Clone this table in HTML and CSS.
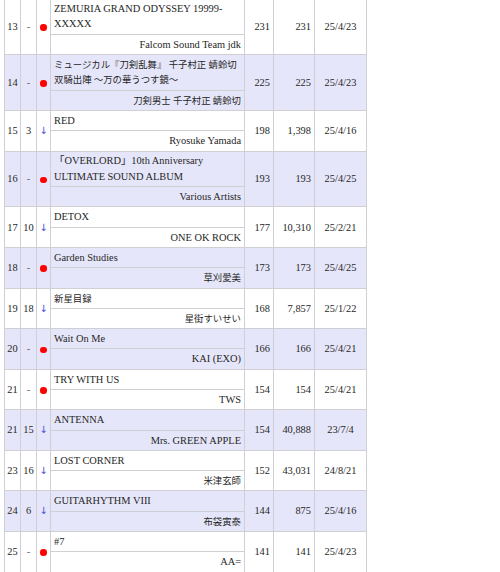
FILE: index.html
```html
<!DOCTYPE html>
<html lang="ja">
<head>
<meta charset="utf-8">
<title>Chart</title>
<link rel="stylesheet" href="styles.css">
</head>
<body>
<table class="chart">
  <colgroup>
    <col class="c-rank"><col class="c-prev"><col class="c-mark"><col class="c-title"><col class="c-n1"><col class="c-n2"><col class="c-date">
  </colgroup>
  <tbody>
    <tr>
      <td>13</td><td class="prev">-</td><td><span class="dot"></span></td>
      <td class="title"><div class="name">ZEMURIA GRAND ODYSSEY 19999-<wbr>XXXXX</div><div class="artist">Falcom Sound Team jdk</div></td>
      <td class="num">231</td><td class="num">231</td><td>25/4/23</td>
    </tr>
    <tr class="alt">
      <td>14</td><td class="prev">-</td><td><span class="dot"></span></td>
      <td class="title"><div class="name"><span class="ja">ミュージカル『刀剣乱舞』 千子村正 蜻蛉切 双騎出陣 〜万の華うつす鏡〜</span></div><div class="artist"><span class="ja">刀剣男士 千子村正 蜻蛉切</span></div></td>
      <td class="num">225</td><td class="num">225</td><td>25/4/23</td>
    </tr>
    <tr>
      <td>15</td><td>3</td><td class="down">↓</td>
      <td class="title"><div class="name">RED</div><div class="artist">Ryosuke Yamada</div></td>
      <td class="num">198</td><td class="num">1,398</td><td>25/4/16</td>
    </tr>
    <tr class="alt">
      <td>16</td><td class="prev">-</td><td><span class="dot"></span></td>
      <td class="title"><div class="name">「OVERLORD」10th Anniversary ULTIMATE SOUND ALBUM</div><div class="artist">Various Artists</div></td>
      <td class="num">193</td><td class="num">193</td><td>25/4/25</td>
    </tr>
    <tr>
      <td>17</td><td>10</td><td class="down">↓</td>
      <td class="title"><div class="name">DETOX</div><div class="artist">ONE OK ROCK</div></td>
      <td class="num">177</td><td class="num">10,310</td><td>25/2/21</td>
    </tr>
    <tr class="alt">
      <td>18</td><td class="prev">-</td><td><span class="dot"></span></td>
      <td class="title"><div class="name">Garden Studies</div><div class="artist"><span class="ja">草刈愛美</span></div></td>
      <td class="num">173</td><td class="num">173</td><td>25/4/25</td>
    </tr>
    <tr>
      <td>19</td><td>18</td><td class="down">↓</td>
      <td class="title"><div class="name"><span class="ja">新星目録</span></div><div class="artist"><span class="ja">星街すいせい</span></div></td>
      <td class="num">168</td><td class="num">7,857</td><td>25/1/22</td>
    </tr>
    <tr class="alt">
      <td>20</td><td class="prev">-</td><td><span class="dot"></span></td>
      <td class="title"><div class="name">Wait On Me</div><div class="artist">KAI (EXO)</div></td>
      <td class="num">166</td><td class="num">166</td><td>25/4/21</td>
    </tr>
    <tr>
      <td>21</td><td class="prev">-</td><td><span class="dot"></span></td>
      <td class="title"><div class="name">TRY WITH US</div><div class="artist">TWS</div></td>
      <td class="num">154</td><td class="num">154</td><td>25/4/21</td>
    </tr>
    <tr class="alt">
      <td>21</td><td>15</td><td class="down">↓</td>
      <td class="title"><div class="name">ANTENNA</div><div class="artist">Mrs. GREEN APPLE</div></td>
      <td class="num">154</td><td class="num">40,888</td><td>23/7/4</td>
    </tr>
    <tr>
      <td>23</td><td>16</td><td class="down">↓</td>
      <td class="title"><div class="name">LOST CORNER</div><div class="artist"><span class="ja">米津玄師</span></div></td>
      <td class="num">152</td><td class="num">43,031</td><td>24/8/21</td>
    </tr>
    <tr class="alt">
      <td>24</td><td>6</td><td class="down">↓</td>
      <td class="title"><div class="name">GUITARHYTHM VIII</div><div class="artist"><span class="ja">布袋寅泰</span></div></td>
      <td class="num">144</td><td class="num">875</td><td>25/4/16</td>
    </tr>
    <tr>
      <td>25</td><td class="prev">-</td><td><span class="dot"></span></td>
      <td class="title"><div class="name">#7</div><div class="artist">AA=</div></td>
      <td class="num">141</td><td class="num">141</td><td>25/4/23</td>
    </tr>
  </tbody>
</table>
</body>
</html>
```
FILE: styles.css
```css
html, body {
  margin: 0;
  padding: 0;
  background: #fff;
}
body {
  font-family: "Liberation Serif", "Noto Sans CJK JP", serif;
  font-size: 10.4px;
  color: #262626;
}
.chart {
  margin: -2px 0 0 4px;
  border-collapse: collapse;
  table-layout: fixed;
  width: 363px;
}
.c-rank { width: 16px; }
.c-prev { width: 16px; }
.c-mark { width: 14px; }
.c-title { width: 194px; }
.c-n1 { width: 29px; }
.c-n2 { width: 41px; }
.c-date { width: 52px; }
.chart td {
  border: 1px solid #cfcfd4;
  padding: 0;
  line-height: 15.4px;
  vertical-align: middle;
  text-align: center;
  white-space: nowrap;
}
.chart tr.alt td {
  background: #e6e6fa;
}
.chart td.title {
  text-align: left;
  white-space: normal;
}
.name {
  padding: 1.95px 3px;
}
.artist {
  padding: 1.95px 3px;
  text-align: right;
  border-top: 1px solid #cfcfd4;
}
.chart td.num {
  text-align: right;
  padding-right: 3px;
}
.prev {
  color: #666;
}
.chart td.down {
  color: #4a4ad6;
  font-family: "DejaVu Sans", sans-serif;
  font-size: 10px;
}
.dot {
  display: inline-block;
  width: 6.5px;
  height: 6.5px;
  border-radius: 50%;
  background: #f00;
  vertical-align: middle;
}
.ja {
  font-size: 9.4px;
  line-height: 8px;
}
```
